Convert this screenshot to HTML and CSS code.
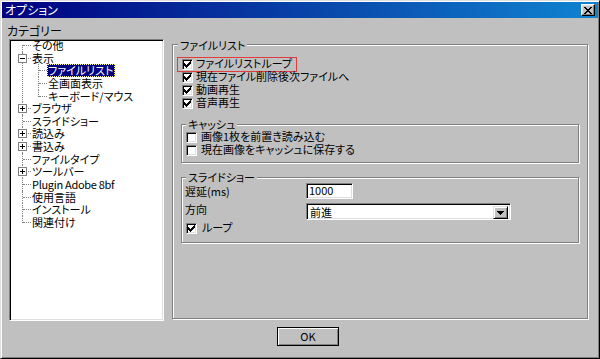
FILE: index.html
```html
<!DOCTYPE html>
<html lang="ja">
<head>
<meta charset="utf-8">
<title>オプション</title>
<link rel="stylesheet" href="styles.css">
</head>
<body>
<div class="window">
  <div class="titlebar">
    <span class="title">オプション</span>
    <span class="close"><svg width="8" height="7" viewBox="0 0 8 7" shape-rendering="crispEdges"><path fill="#000" d="M0 0h2v1H0zM6 0h2v1H6zM1 1h2v1H1zM5 1h2v1H5zM2 2h4v1H2zM3 3h2v1H3zM2 4h4v1H2zM1 5h2v1H1zM5 5h2v1H5zM0 6h2v1H0zM6 6h2v1H6z"/></svg></span>
  </div>
  <div class="cat-label">カテゴリー</div>
  <div class="main">
    <div class="tree">
      <ul class="tree-list">
        <li class="first"><div class="row"><span class="lbl">その他</span></div></li>
        <li>
          <div class="row"><svg class="exp" width="9" height="9" viewBox="0 0 9 9" shape-rendering="crispEdges"><rect x="0.5" y="0.5" width="8" height="8" fill="#fff" stroke="#808080"/><path d="M2 4.5h5" stroke="#000"/></svg><span class="lbl">表示</span></div>
          <ul class="sub-list">
            <li><div class="row"><span class="lbl sel">ファイルリスト</span></div></li>
            <li><div class="row"><span class="lbl">全画面表示</span></div></li>
            <li class="last"><div class="row"><span class="lbl">キーボード/マウス</span></div></li>
          </ul>
        </li>
        <li><div class="row"><svg class="exp" width="9" height="9" viewBox="0 0 9 9" shape-rendering="crispEdges"><rect x="0.5" y="0.5" width="8" height="8" fill="#fff" stroke="#808080"/><path d="M2 4.5h5M4.5 2v5" stroke="#000"/></svg><span class="lbl">ブラウザ</span></div></li>
        <li><div class="row"><span class="lbl">スライドショー</span></div></li>
        <li><div class="row"><svg class="exp" width="9" height="9" viewBox="0 0 9 9" shape-rendering="crispEdges"><rect x="0.5" y="0.5" width="8" height="8" fill="#fff" stroke="#808080"/><path d="M2 4.5h5M4.5 2v5" stroke="#000"/></svg><span class="lbl">読込み</span></div></li>
        <li><div class="row"><svg class="exp" width="9" height="9" viewBox="0 0 9 9" shape-rendering="crispEdges"><rect x="0.5" y="0.5" width="8" height="8" fill="#fff" stroke="#808080"/><path d="M2 4.5h5M4.5 2v5" stroke="#000"/></svg><span class="lbl">書込み</span></div></li>
        <li><div class="row"><span class="lbl">ファイルタイプ</span></div></li>
        <li><div class="row"><svg class="exp" width="9" height="9" viewBox="0 0 9 9" shape-rendering="crispEdges"><rect x="0.5" y="0.5" width="8" height="8" fill="#fff" stroke="#808080"/><path d="M2 4.5h5M4.5 2v5" stroke="#000"/></svg><span class="lbl">ツールバー</span></div></li>
        <li><div class="row"><span class="lbl latin">Plugin Adobe 8bf</span></div></li>
        <li><div class="row"><span class="lbl">使用言語</span></div></li>
        <li><div class="row"><span class="lbl">インストール</span></div></li>
        <li class="last"><div class="row"><span class="lbl">関連付け</span></div></li>
      </ul>
    </div>

    <div class="group big">
      <div class="gtitle">ファイルリスト</div>
      <div class="checks main-checks">
        <div class="cb-row focus"><span class="cb"><svg width="7" height="7" viewBox="0 0 7 7" shape-rendering="crispEdges"><path fill="#000" d="M6 0h1v1H6zM5 1h2v1H5zM0 2h1v1H0zM4 2h3v1H4zM0 3h2v1H0zM3 3h3v1H3zM0 4h5v1H0zM1 5h3v1H1zM2 6h1v1H2z"/></svg></span><span class="cb-text">ファイルリストループ</span></div>
        <div class="cb-row"><span class="cb"><svg width="7" height="7" viewBox="0 0 7 7" shape-rendering="crispEdges"><path fill="#000" d="M6 0h1v1H6zM5 1h2v1H5zM0 2h1v1H0zM4 2h3v1H4zM0 3h2v1H0zM3 3h3v1H3zM0 4h5v1H0zM1 5h3v1H1zM2 6h1v1H2z"/></svg></span><span class="cb-text">現在ファイル削除後次ファイルへ</span></div>
        <div class="cb-row"><span class="cb"><svg width="7" height="7" viewBox="0 0 7 7" shape-rendering="crispEdges"><path fill="#000" d="M6 0h1v1H6zM5 1h2v1H5zM0 2h1v1H0zM4 2h3v1H4zM0 3h2v1H0zM3 3h3v1H3zM0 4h5v1H0zM1 5h3v1H1zM2 6h1v1H2z"/></svg></span><span class="cb-text">動画再生</span></div>
        <div class="cb-row"><span class="cb"><svg width="7" height="7" viewBox="0 0 7 7" shape-rendering="crispEdges"><path fill="#000" d="M6 0h1v1H6zM5 1h2v1H5zM0 2h1v1H0zM4 2h3v1H4zM0 3h2v1H0zM3 3h3v1H3zM0 4h5v1H0zM1 5h3v1H1zM2 6h1v1H2z"/></svg></span><span class="cb-text">音声再生</span></div>
      </div>

      <div class="group inner cache">
        <div class="gtitle">キャッシュ</div>
        <div class="checks cache-checks">
          <div class="cb-row"><span class="cb"></span><span class="cb-text">画像1枚を前置き読み込む</span></div>
          <div class="cb-row"><span class="cb"></span><span class="cb-text">現在画像をキャッシュに保存する</span></div>
        </div>
      </div>

      <div class="group inner slide">
        <div class="gtitle">スライドショー</div>
        <div class="field">
          <span class="flabel">遅延(ms)</span>
          <div class="textbox">1000</div>
        </div>
        <div class="field field-dir">
          <span class="flabel">方向</span>
          <div class="combo">
            <span class="combo-text">前進</span>
            <span class="combo-btn"><svg width="7" height="4" viewBox="0 0 7 4" shape-rendering="crispEdges"><path fill="#000" d="M0 0h7v1H0zM1 1h5v1H1zM2 2h3v1H2zM3 3h1v1H3z"/></svg></span>
          </div>
        </div>
        <div class="cb-row loop"><span class="cb"><svg width="7" height="7" viewBox="0 0 7 7" shape-rendering="crispEdges"><path fill="#000" d="M6 0h1v1H6zM5 1h2v1H5zM0 2h1v1H0zM4 2h3v1H4zM0 3h2v1H0zM3 3h3v1H3zM0 4h5v1H0zM1 5h3v1H1zM2 6h1v1H2z"/></svg></span><span class="cb-text">ループ</span></div>
      </div>
    </div>
  </div>
  <div class="footer">
    <div class="ok">OK</div>
  </div>
</div>
</body>
</html>
```

FILE: styles.css
```css
* { box-sizing: border-box; }

html, body {
  margin: 0;
  padding: 0;
}

body {
  width: 600px;
  height: 359px;
  overflow: hidden;
  background: #c0c0c0;
  color: #000;
  font-family: "Noto Sans CJK JP", "Noto Sans", sans-serif;
  font-size: 11px;
  font-feature-settings: "palt";
}

.window {
  width: 600px;
  height: 359px;
  padding: 1px;
  border: 1px solid;
  border-color: #dfdfdf #000 #000 #dfdfdf;
  box-shadow: inset 1px 1px #fff, inset -1px -1px #808080;
  background: #c0c0c0;
}

/* title bar */
.titlebar {
  height: 16px;
  display: flex;
  align-items: center;
  justify-content: space-between;
  padding: 0 3px 0 3px;
  background: linear-gradient(90deg, #000080, #1084d0);
  color: #fff;
}

.title {
  line-height: 16px;
  font-size: 12px;
}

.close {
  width: 14px;
  height: 12px;
  display: flex;
  align-items: center;
  justify-content: center;
  background: #c0c0c0;
  border: 1px solid;
  border-color: #fff #000 #000 #fff;
  box-shadow: inset -1px -1px #808080, inset 1px 1px #dfdfdf;
}

.close svg { display: block; }

.cat-label {
  margin: 6px 0 0 5px;
  height: 13px;
  line-height: 13px;
  font-size: 12px;
}

.main {
  display: flex;
  align-items: flex-start;
  gap: 8px;
  margin-top: 2px;
  padding-left: 7px;
}

/* tree */
.tree {
  width: 155px;
  height: 282px;
  flex: none;
  background: #fff;
  border: 1px solid;
  border-color: #808080 #fff #fff #808080;
  box-shadow: inset 1px 1px #000, inset -1px -1px #dfdfdf;
}

.tree-list, .sub-list {
  list-style: none;
  margin: 0;
  padding: 0;
}

.tree-list { margin-top: -1px; }

.tree-list > li,
.sub-list > li {
  position: relative;
}

.tree-list > li::before,
.sub-list > li::before {
  content: "";
  position: absolute;
  top: 0;
  bottom: 0;
  border-left: 1px dotted #808080;
}

.tree-list > li::before { left: 12px; }
.sub-list > li::before { left: 28px; }

.tree-list > li.first::before { top: 6px; }
.tree-list > li.last::before,
.sub-list > li.last::before { bottom: auto; height: 7px; }

.row {
  position: relative;
  height: 12.65px;
  line-height: 12.65px;
  padding-left: 21px;
  white-space: nowrap;
}

.sub-list .row { padding-left: 37px; }

.row::before {
  content: "";
  position: absolute;
  top: 6px;
  width: 8px;
  border-top: 1px dotted #808080;
}

.tree-list > li > .row::before { left: 13px; }
.sub-list > li > .row::before { left: 29px; }

.exp {
  position: absolute;
  left: 8px;
  top: 2px;
  display: block;
}

.lbl {
  display: inline-block;
  padding: 0 1px;
}

.lbl.latin { letter-spacing: -0.3px; }

.lbl.sel {
  padding: 0 2px 0 1px;
  background: #000080;
  color: #fff;
  outline: 1px dotted #ffff80;
  outline-offset: -1px;
}

/* group boxes */
.group {
  display: flex;
  flex-direction: column;
  align-items: flex-start;
  border: 1px solid #808080;
  box-shadow: inset 1px 1px #fff, 1px 1px #fff;
}

.gtitle {
  background: #c0c0c0;
  height: 12px;
  line-height: 12px;
  padding: 0 2px;
  white-space: nowrap;
}

.group.big {
  width: 416px;
  height: 275px;
  margin-top: 5px;
  flex: none;
}

.group.big > .gtitle {
  margin: -6px 0 0 5px;
}

.group.inner {
  align-self: stretch;
  margin: 14px 8px 0 8px;
}

.group.inner > .gtitle {
  margin: -7px 0 0 4px;
}

.group.cache { height: 39px; }
.group.slide { height: 66px; }

.checks {
  display: flex;
  flex-direction: column;
  align-items: flex-start;
}

.main-checks { margin: 7px 0 0 5px; }
.cache-checks { margin: 1px 0 0 0; }

.cb-row {
  display: flex;
  align-items: flex-start;
  height: 13px;
  padding: 0 3px 0 4px;
}

.cb-row.focus {
  width: 118px;
  box-shadow: 0 0 0 1px #e03c3c;
}

.cb {
  width: 11px;
  height: 11px;
  flex: none;
  margin: 1px 3px 0 0;
  display: flex;
  align-items: center;
  justify-content: center;
  background: #fff;
  border: 1px solid;
  border-color: #808080 #fff #fff #808080;
  box-shadow: inset 1px 1px #000, inset -1px -1px #dfdfdf;
}

.cb svg { display: block; }

.cache .cb { margin-right: 4px; }

.cb-text {
  line-height: 11px;
  white-space: nowrap;
}

/* slideshow fields */
.field {
  display: flex;
  align-items: center;
  padding-left: 3px;
}

.flabel {
  width: 121px;
  flex: none;
  line-height: 13px;
  white-space: nowrap;
}

.textbox {
  width: 47px;
  height: 16px;
  padding-left: 2px;
  line-height: 13px;
  background: #fff;
  border: 1px solid;
  border-color: #808080 #fff #fff #808080;
  box-shadow: inset 1px 1px #000, inset -1px -1px #dfdfdf;
}

.field-dir {
  margin-top: 4px;
  align-items: flex-start;
}

.combo {
  width: 205px;
  height: 17px;
  display: flex;
  justify-content: space-between;
  padding: 2px;
  background: #fff;
  border: 1px solid;
  border-color: #808080 #fff #fff #808080;
  box-shadow: inset 1px 1px #000, inset -1px -1px #dfdfdf;
}

.combo-text {
  padding-left: 1px;
  line-height: 13px;
}

.combo-btn {
  width: 15px;
  height: 13px;
  display: flex;
  align-items: center;
  justify-content: center;
  background: #c0c0c0;
  border: 1px solid;
  border-color: #dfdfdf #000 #000 #dfdfdf;
  box-shadow: inset 1px 1px #fff, inset -1px -1px #808080;
}

.combo-btn svg { display: block; }

.cb-row.loop { margin-top: 2px; padding-left: 4px; }
.loop .cb { margin-right: 5px; }

/* footer */
.footer {
  margin-top: 6px;
  padding-left: 275px;
}

.ok {
  width: 62px;
  height: 19px;
  line-height: 17px;
  text-align: center;
  background: #c0c0c0;
  border: 1px solid #000;
  box-shadow: inset 1px 1px #fff, inset -1px -1px #808080;
}
```
